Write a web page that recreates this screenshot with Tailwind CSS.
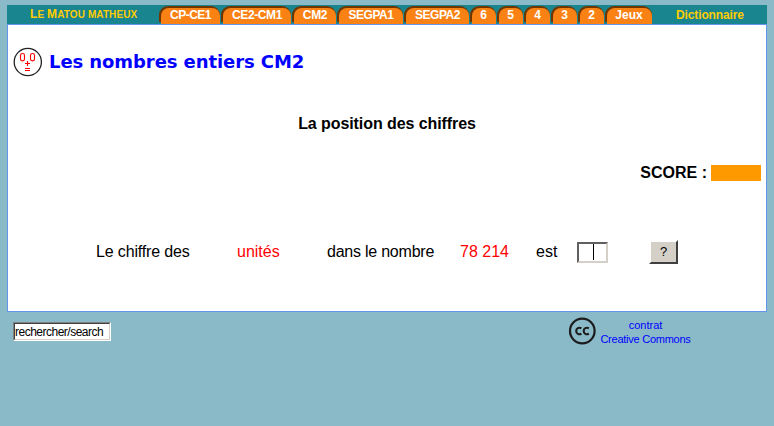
<!DOCTYPE html>
<html lang="fr">
<head>
<meta charset="utf-8">
<title>Le Matou matheux</title>
<script src="https://cdn.jsdelivr.net/npm/@tailwindcss/browser@4"></script>
</head>
<body class="h-[426px] w-[774px] overflow-hidden bg-[#8ab9c8] pt-[5px] pl-[7px] font-['Liberation_Sans',Arial,sans-serif] text-black">
<header class="flex h-[19px] w-[760px] items-end bg-[#19858f] text-[12px] leading-[18px] font-bold whitespace-nowrap">
  <a class="w-[152px] pl-[23px] text-[10px] tracking-[0.1px] text-[#ffcc00] uppercase"><span class="text-[12px]">L</span>e <span class="text-[12px]">M</span>atou matheux</a>
  <nav class="flex h-[18px] gap-px text-center text-white">
    <div class="h-[16px] w-[61px] rounded-t-[9px] bg-[#703600] pt-[2px] pl-[2px]"><a class="block h-[16px] rounded-t-[8px] bg-[#fa8214] leading-[15px] tracking-[-0.5px]">CP-CE1</a></div>
    <div class="h-[16px] w-[70px] rounded-t-[9px] bg-[#703600] pt-[2px] pl-[2px]"><a class="block h-[16px] rounded-t-[8px] bg-[#fa8214] leading-[15px] tracking-[-0.4px]">CE2-CM1</a></div>
    <div class="h-[16px] w-[44px] rounded-t-[9px] bg-[#703600] pt-[2px] pl-[2px]"><a class="block h-[16px] rounded-t-[8px] bg-[#fa8214] leading-[15px] tracking-[-0.3px]">CM2</a></div>
    <div class="h-[16px] w-[66px] rounded-t-[9px] bg-[#703600] pt-[2px] pl-[2px]"><a class="block h-[16px] rounded-t-[8px] bg-[#fa8214] leading-[15px] tracking-[-0.5px]">SEGPA1</a></div>
    <div class="h-[16px] w-[65px] rounded-t-[9px] bg-[#703600] pt-[2px] pl-[2px]"><a class="block h-[16px] rounded-t-[8px] bg-[#fa8214] leading-[15px] tracking-[-0.5px]">SEGPA2</a></div>
    <div class="h-[16px] w-[26px] rounded-t-[9px] bg-[#703600] pt-[2px] pl-[2px]"><a class="block h-[16px] rounded-t-[8px] bg-[#fa8214] pr-px leading-[15px]">6</a></div>
    <div class="h-[16px] w-[26px] rounded-t-[9px] bg-[#703600] pt-[2px] pl-[2px]"><a class="block h-[16px] rounded-t-[8px] bg-[#fa8214] pr-px leading-[15px]">5</a></div>
    <div class="h-[16px] w-[26px] rounded-t-[9px] bg-[#703600] pt-[2px] pl-[2px]"><a class="block h-[16px] rounded-t-[8px] bg-[#fa8214] pr-px leading-[15px]">4</a></div>
    <div class="h-[16px] w-[26px] rounded-t-[9px] bg-[#703600] pt-[2px] pl-[2px]"><a class="block h-[16px] rounded-t-[8px] bg-[#fa8214] pr-px leading-[15px]">3</a></div>
    <div class="h-[16px] w-[26px] rounded-t-[9px] bg-[#703600] pt-[2px] pl-[2px]"><a class="block h-[16px] rounded-t-[8px] bg-[#fa8214] pr-px leading-[15px]">2</a></div>
    <div class="h-[16px] w-[47px] rounded-t-[9px] bg-[#703600] pt-[2px] pl-[2px]"><a class="block h-[16px] rounded-t-[8px] bg-[#fa8214] pr-px leading-[15px]">Jeux</a></div>
  </nav>
  <a class="ml-[24px] tracking-[-0.12px] text-[#ffcc00]">Dictionnaire</a>
</header>

<main class="h-[288px] w-[760px] border border-[#6495ed] bg-white whitespace-nowrap">
  <div class="flex h-[74px] items-center pl-[5px]">
    <svg class="h-[30px] w-[30px]" viewBox="0 0 30 30" fill="none">
      <circle cx="14.8" cy="15" r="13.6" stroke="#222" stroke-width="1.3"/>
      <g stroke="#f00" stroke-width="1.15">
        <rect x="7.5" y="6.5" width="4" height="7.4" rx="1.9"/>
        <rect x="17.5" y="6.5" width="4" height="7.4" rx="1.9"/>
        <path d="M12 16.5h5M14.5 14v5M12 21.5h5M12 23.5h5"/>
      </g>
    </svg>
    <h1 class="ml-[6px] font-['DejaVu_Sans',Verdana,sans-serif] text-[18px] leading-[24px] font-bold tracking-[-0.08px] text-[#0000ff]">Les nombres entiers CM2</h1>
  </div>
  <h2 class="mt-[13px] h-[24px] text-center text-[16px] leading-[24px] font-bold tracking-[-0.08px]">La position des chiffres</h2>
  <div class="mt-[25px] flex h-[24px] items-center justify-end pr-[5px]">
    <span class="text-[16px] leading-[24px] font-bold">SCORE :</span>
    <span class="ml-[4px] h-[16px] w-[50px] bg-[#ff9900]"></span>
  </div>
  <div class="mt-[54px] flex h-[26px] items-center text-[16px] leading-[24px]">
    <span class="w-[141px] pl-[88px] tracking-[-0.15px]">Le chiffre des</span>
    <span class="ml-[88px] w-[90px] text-[#ff0000]">unités</span>
    <span class="w-[133px] tracking-[-0.23px]">dans le nombre</span>
    <span class="w-[76px] text-[#ff0000]">78 214</span>
    <span class="w-[41px]">est</span>
    <span class="flex h-[21px] w-[31px] items-center justify-center border-2 border-t-[#606060] border-r-[#d4d0c8] border-b-[#d4d0c8] border-l-[#606060] bg-white"><i class="ml-px h-[16px] w-px bg-black"></i></span>
    <button class="ml-[41px] h-[24px] w-[29px] border-2 border-t-white border-r-[#404040] border-b-[#404040] border-l-white bg-[#d4d0c8] text-[13px] leading-[20px]">?</button>
  </div>
</main>

<footer class="flex h-[40px] w-[760px] whitespace-nowrap">
  <div class="mt-[10px] ml-[6px] h-[19px] w-[98px] border border-t-[#808080] border-r-white border-b-white border-l-[#808080]">
    <div class="h-[17px] border border-t-[#404040] border-r-[#d4d0c8] border-b-[#d4d0c8] border-l-[#404040] bg-white text-[12px] leading-[17px] tracking-[-0.5px]">rechercher/search</div>
  </div>
  <svg class="mt-[5px] ml-[457px] h-[28px] w-[28px] shrink-0" viewBox="0 0 28 28" fill="none" stroke="#1c1c1c">
    <circle cx="14.3" cy="14" r="12.3" stroke-width="2.2"/>
    <path d="M13.4 11.2C10.8 9.9 8.2 11.3 8.2 14S10.8 18.1 13.4 16.8M20.9 11.2C18.3 9.9 15.7 11.3 15.7 14S18.3 18.1 20.9 16.8" stroke-width="2.1"/>
  </svg>
  <div class="mt-[6px] ml-[4px] w-[91px] text-center text-[11px] leading-[14px] tracking-[-0.25px] text-[#0000ff]"><span class="tracking-normal">contrat</span><br>Creative Commons</div>
</footer>
</body>
</html>
